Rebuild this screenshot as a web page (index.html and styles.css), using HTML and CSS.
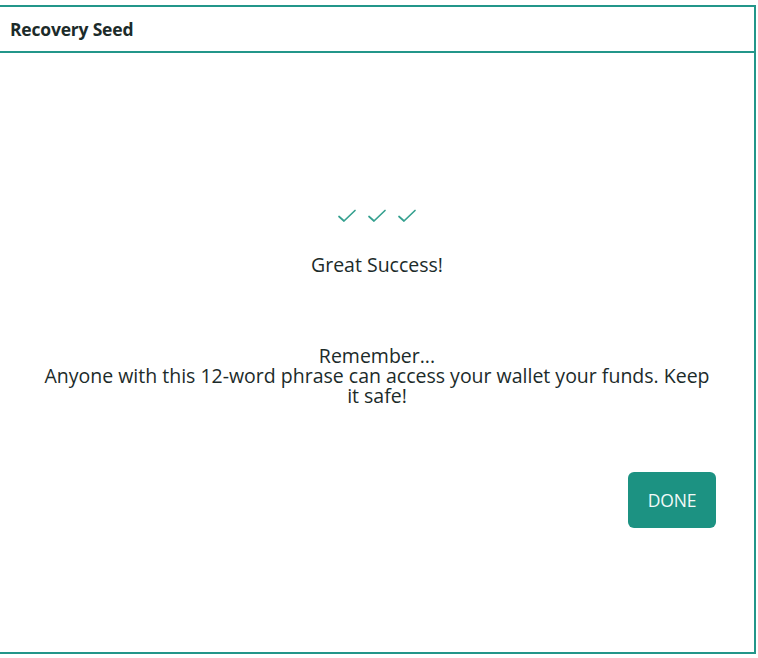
FILE: index.html
```html
<!DOCTYPE html>
<html>
<head>
<meta charset="utf-8">
<link rel="stylesheet" href="styles.css">
</head>
<body>
<div class="panel">
  <div class="panel-header">Recovery Seed</div>
  <div class="panel-body">
    <div class="checks">
      <svg class="check" viewBox="0 0 20 16" width="20" height="16"><path d="M2 8.5 L7 13 L18 2.5" fill="none" stroke="#35a08f" stroke-width="1.7" stroke-linecap="round" stroke-linejoin="round"/></svg>
      <svg class="check" viewBox="0 0 20 16" width="20" height="16"><path d="M2 8.5 L7 13 L18 2.5" fill="none" stroke="#35a08f" stroke-width="1.7" stroke-linecap="round" stroke-linejoin="round"/></svg>
      <svg class="check" viewBox="0 0 20 16" width="20" height="16"><path d="M2 8.5 L7 13 L18 2.5" fill="none" stroke="#35a08f" stroke-width="1.7" stroke-linecap="round" stroke-linejoin="round"/></svg>
    </div>
    <div class="success">Great Success!</div>
    <div class="reminder">
      <div class="reminder-title">Remember...</div>
      <div class="reminder-text">Anyone with this 12-word phrase can access your wallet your funds. Keep it safe!</div>
    </div>
    <div class="actions">
      <button class="btn-done">DONE</button>
    </div>
  </div>
</div>
</body>
</html>
```
FILE: styles.css
```css
* { box-sizing: border-box; }
html, body { margin: 0; padding: 0; background: #fff; }
body {
  font-family: "Open Sans", "Noto Sans", sans-serif;
  color: #1c2b2a;
}
.panel {
  margin-top: 5px;
  width: 756px;
  height: 649px;
  border: 2px solid #23968a;
  border-left: none;
  display: flex;
  flex-direction: column;
}
.panel-header {
  height: 46px;
  border-bottom: 2px solid #23968a;
  display: flex;
  align-items: center;
  padding-left: 10px;
  font-weight: 700;
  font-size: 17.5px;
  letter-spacing: -0.2px;
}
.panel-body {
  flex: 1;
  display: flex;
  flex-direction: column;
  align-items: center;
  padding-top: 155px;
}
.checks {
  display: flex;
  gap: 10px;
}
.check { display: block; }
.success {
  margin-top: 29px;
  font-size: 19.5px;
  line-height: 24px;
}
.reminder {
  margin-top: 69px;
  width: 672px;
  text-align: center;
  font-size: 19.5px;
  line-height: 20px;
}
.actions {
  align-self: stretch;
  display: flex;
  justify-content: flex-end;
  padding-right: 38px;
  margin-top: 66px;
}
.btn-done {
  width: 88px;
  height: 56px;
  border: none;
  border-radius: 6px;
  background: #1c9282;
  color: #f2faf8;
  font-family: "Open Sans", "Noto Sans", sans-serif;
  font-size: 17.5px;
  font-weight: 400;
  letter-spacing: -0.2px;
}
```
